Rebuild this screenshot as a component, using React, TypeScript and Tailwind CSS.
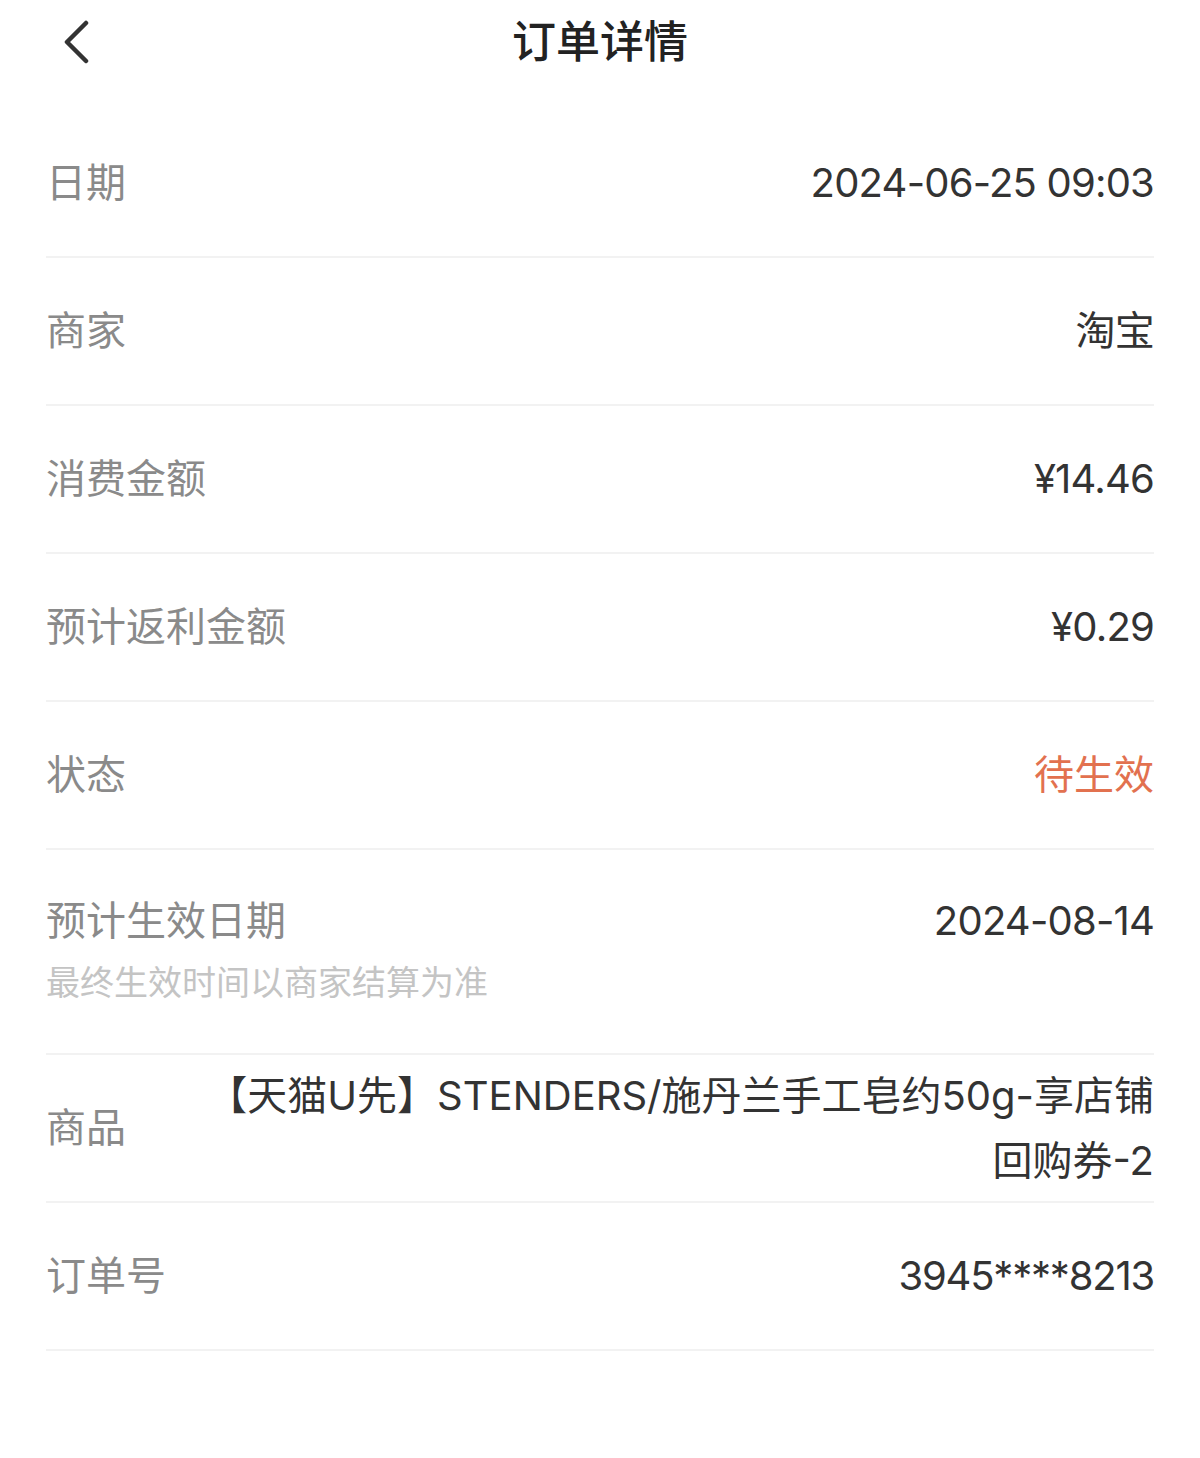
const FONT = { fontFamily: 'Inter, "Noto Sans CJK SC", "Noto Sans", sans-serif' };

const rows: { label: string; value: string; tone?: "orange" }[] = [
  { label: "日期", value: "2024-06-25 09:03" },
  { label: "商家", value: "淘宝" },
  { label: "消费金额", value: "¥14.46" },
  { label: "预计返利金额", value: "¥0.29" },
  { label: "状态", value: "待生效", tone: "orange" },
];

export default function App() {
  return (
    <div className="min-h-[1458px] w-[1200px] bg-white" style={FONT}>
      {/* header */}
      <div className="relative flex h-[84px] items-center justify-center">
        <svg
          className="absolute left-[60px] top-[20px]"
          width="32"
          height="44"
          viewBox="0 0 32 44"
          fill="none"
          stroke="#333"
          strokeWidth="4.5"
          strokeLinecap="round"
          strokeLinejoin="round"
        >
          <path d="M26 3 L7 22 L26 41" />
        </svg>
        <h1 className="text-[44px] font-medium leading-none text-[#222]">订单详情</h1>
      </div>
      <div className="h-[26px]" />

      <div className="px-[46px]">
        {rows.map((r) => (
          <div
            key={r.label}
            className="flex h-[148px] items-center justify-between border-b-2 border-[#f2f2f2]"
          >
            <span className="text-[40px] text-[#8a8a8a]">{r.label}</span>
            <span
              className={
                r.tone === "orange"
                  ? "text-[40px] text-[#e2714f]"
                  : "text-[40px] tracking-[-0.02em] text-[#333]"
              }
            >
              {r.value}
            </span>
          </div>
        ))}

        {/* expected effective date */}
        <div className="flex items-start justify-between border-b-2 border-[#f2f2f2] pt-[48px] pb-[49px]">
          <div className="flex flex-col">
            <span className="text-[40px] leading-[46px] text-[#8a8a8a]">预计生效日期</span>
            <span className="mt-[18px] text-[34px] leading-[42px] text-[#c4c4c4]">
              最终生效时间以商家结算为准
            </span>
          </div>
          <span className="text-[40px] leading-[46px] tracking-[-0.02em] text-[#333]">2024-08-14</span>
        </div>

        {/* product */}
        <div className="flex h-[148px] items-center justify-between gap-[60px] border-b-2 border-[#f2f2f2]">
          <span className="shrink-0 text-[40px] text-[#8a8a8a]">商品</span>
          <span className="whitespace-nowrap text-right text-[40px] leading-[65px] text-[#333]">
            【天猫U先】STENDERS/施丹兰手工皂约50g-享店铺
            <br />
            回购券-2
          </span>
        </div>

        <div className="flex h-[148px] items-center justify-between border-b-2 border-[#f2f2f2]">
          <span className="text-[40px] text-[#8a8a8a]">订单号</span>
          <span className="text-[40px] tracking-[-0.03em] text-[#333]">3945****8213</span>
        </div>
      </div>
    </div>
  );
}
